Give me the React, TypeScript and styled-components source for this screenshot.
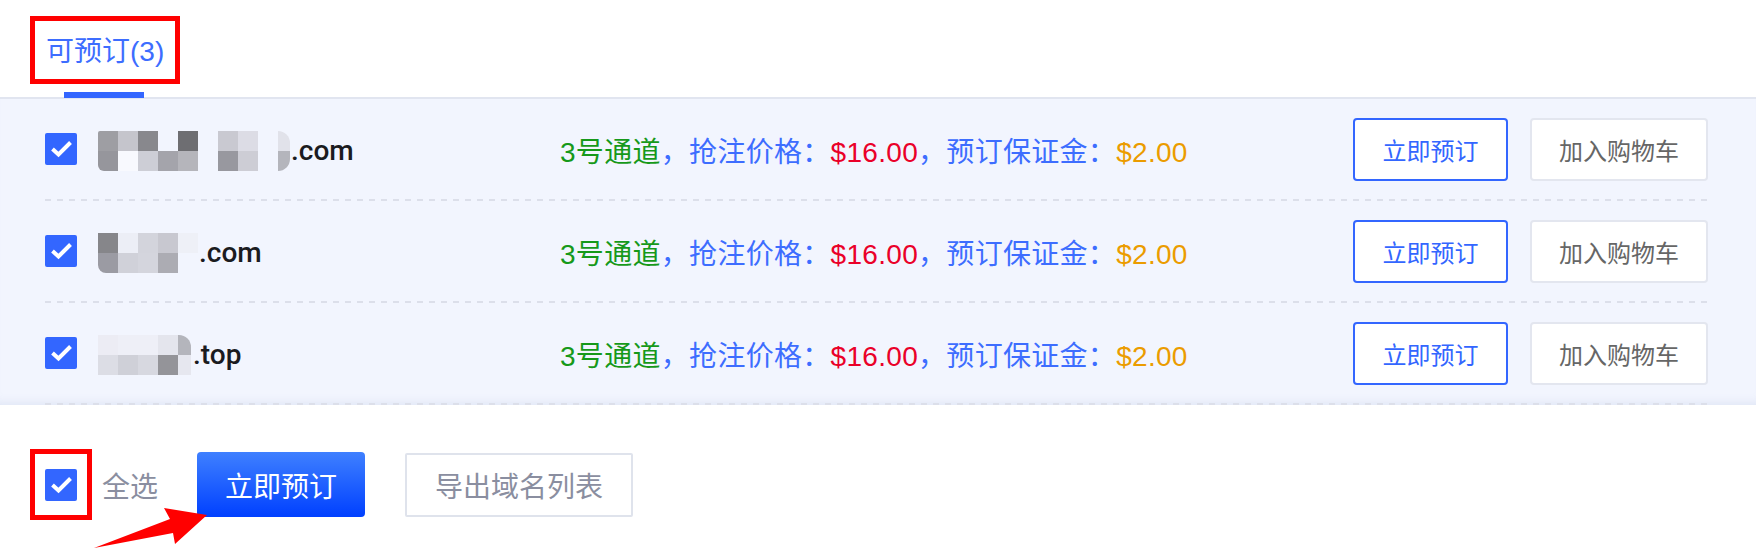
import React from "react";
import styled, { createGlobalStyle } from "styled-components";

const GlobalStyle = createGlobalStyle`
  html, body { margin: 0; padding: 0; background: #ffffff; }
  body { font-family: "Liberation Sans", "Noto Sans CJK SC", sans-serif; }
`;

const Page = styled.div`
  width: 100%;
  background: #ffffff;
`;

const Header = styled.div`
  height: 97px;
  border-bottom: 2px solid #e1e5f0;
  display: flex;
  padding-left: 46px;
  background: #ffffff;
`;

const Tab = styled.div`
  position: relative;
  display: flex;
  align-items: center;
  font-size: 28px;
  color: #3d6dff;
  white-space: nowrap;
`;

const TabIndicator = styled.span`
  position: absolute;
  left: 50%;
  bottom: -1px;
  width: 80px;
  height: 6px;
  margin-left: -41px;
  background: #3366ff;
`;

const Annotation = styled.span<{ $top: number; $right: number; $bottom: number; $left: number }>`
  position: absolute;
  top: ${(p) => p.$top}px;
  right: ${(p) => p.$right}px;
  bottom: ${(p) => p.$bottom}px;
  left: ${(p) => p.$left}px;
  border: 5px solid #ff0000;
  pointer-events: none;
`;

const List = styled.div`
  background: #f2f5fe;
  box-shadow: inset 0 -10px 10px -8px rgba(200, 208, 232, 0.45);
`;

const Row = styled.div`
  display: flex;
  align-items: center;
  height: 102px;
  box-sizing: border-box;
  padding-bottom: 2px;
  margin: 0 48px 0 45px;
  background-image: linear-gradient(to right, #dcdfea 50%, transparent 50%);
  background-size: 12px 2px;
  background-repeat: repeat-x;
  background-position: left bottom;
`;

const CheckBox = styled.span`
  position: relative;
  width: 32px;
  height: 32px;
  flex-shrink: 0;
  background: #3366ff;
  border-radius: 2px;
  display: flex;
  align-items: center;
  justify-content: center;
`;

const Domain = styled.div`
  width: 462px;
  margin-left: 21px;
  display: flex;
  align-items: center;
  flex-shrink: 0;
  padding-top: 3px;
`;

const Mosaic = styled.div<{ $cols: string; $radius: string }>`
  display: grid;
  grid-template-columns: ${(p) => p.$cols};
  grid-template-rows: 20px 20px;
  border-radius: ${(p) => p.$radius};
  overflow: hidden;
`;

const Cell = styled.span<{ $color: string }>`
  background: ${(p) => p.$color};
`;

const DomainText = styled.span<{ $gap: number }>`
  margin-left: ${(p) => p.$gap}px;
  font-family: Roboto, "Liberation Sans", sans-serif;
  font-size: 28px;
  font-weight: 500;
  color: #1b1b1f;
`;

const Info = styled.div`
  flex: 1;
  font-size: 28px;
  letter-spacing: 0.3px;
  white-space: nowrap;
  padding-top: 1px;
`;

const toneColors: Record<string, string> = {
  green: "#16991a",
  blue: "#3d6dff",
  red: "#ea0029",
  orange: "#eb9c00",
};

const Seg = styled.span<{ $tone: string }>`
  color: ${(p) => toneColors[p.$tone]};
`;

const Actions = styled.div`
  display: flex;
  gap: 22px;
`;

const BaseButton = styled.button`
  box-sizing: border-box;
  height: 63px;
  padding: 0;
  background: #ffffff;
  border-radius: 4px;
  font-family: inherit;
  font-size: 24px;
  cursor: pointer;
`;

const OutlineButton = styled(BaseButton)`
  width: 155px;
  border: 2px solid #3366ff;
  color: #3366ff;
`;

const GhostButton = styled(BaseButton)`
  width: 178px;
  border: 2px solid #e3e6ef;
  color: #666666;
`;

const Footer = styled.div`
  position: relative;
  height: 155px;
  box-sizing: border-box;
  padding: 47px 0 0 45px;
`;

const FooterBar = styled.div`
  display: flex;
  align-items: center;
  height: 65px;
`;

const SelectAll = styled.span`
  margin-left: 25px;
  font-size: 28px;
  color: #8a8ea0;
`;

const PrimaryButton = styled.button`
  margin-left: 39px;
  width: 168px;
  height: 65px;
  border: none;
  border-radius: 4px;
  background: linear-gradient(180deg, #3f80ff 0%, #0040ff 100%);
  color: #ffffff;
  font-family: inherit;
  font-size: 28px;
  padding: 0;
`;

const ExportButton = styled.button`
  margin-left: 40px;
  width: 228px;
  height: 64px;
  box-sizing: border-box;
  border: 2px solid #dfe3ec;
  border-radius: 2px;
  background: #ffffff;
  color: #8a8ea0;
  font-family: inherit;
  font-size: 28px;
  padding: 0;
`;

const ArrowSvg = styled.svg`
  position: absolute;
  left: 0;
  top: 0;
  pointer-events: none;
`;

const Check = () => (
  <svg width="32" height="32" viewBox="0 0 32 32">
    <polyline points="7.5,16 13.5,21.5 25.5,9.5" fill="none" stroke="#ffffff" strokeWidth="4" />
  </svg>
);

type RowData = {
  cols: string;
  radius: string;
  top: string[];
  bottom: string[];
  tld: string;
  gap: number;
};

const T = "transparent";

const rows: RowData[] = [
  {
    cols: "repeat(9, 20px) 12px",
    radius: "2px 12px 12px 6px",
    top: ["#9e9ea3", "#c5c5cc", "#88888d", T, "#6e6e72", T, "#c9c9d1", "#dcdce5", T, "#e1e2ea"],
    bottom: ["#96969c", "#f8f9fe", "#cdced6", "#a4a4ab", "#b5b5bb", T, "#98989f", "#cdcdd5", T, "#b4b5bc"],
    tld: ".com",
    gap: 1,
  },
  {
    cols: "repeat(5, 20px)",
    radius: "0 0 0 8px",
    top: ["#86868a", "#eceef6", "#d3d4dc", "#c8c8d0", "#eef0f7"],
    bottom: ["#9b9ba3", "#d0d1d9", "#d4d5dd", "#acacb3", T],
    tld: ".com",
    gap: 1,
  },
  {
    cols: "repeat(4, 20px) 13px",
    radius: "0 12px 0 0",
    top: ["#ececf4", "#eeeff7", "#eeeff7", "#e4e5ed", "#b4b5bc"],
    bottom: ["#dcdde5", "#cfd0d8", "#d7d8e0", "#949499", "#e6e7ef"],
    tld: ".top",
    gap: 2,
  },
];

export default function App() {
  return (
    <Page>
      <GlobalStyle />
      <Header>
        <Tab>
          可预订(3)
          <TabIndicator />
          <Annotation $top={16} $right={-16} $bottom={13} $left={-16} />
        </Tab>
      </Header>
      <List>
        {rows.map((r, i) => (
          <Row key={i}>
            <CheckBox>
              <Check />
            </CheckBox>
            <Domain>
              <Mosaic $cols={r.cols} $radius={r.radius}>
                {[...r.top, ...r.bottom].map((c, j) => (
                  <Cell key={j} $color={c} />
                ))}
              </Mosaic>
              <DomainText $gap={r.gap}>{r.tld}</DomainText>
            </Domain>
            <Info>
              <Seg $tone="green">3号通道</Seg>
              <Seg $tone="blue">，抢注价格：</Seg>
              <Seg $tone="red">$16.00</Seg>
              <Seg $tone="blue">，预订保证金：</Seg>
              <Seg $tone="orange">$2.00</Seg>
            </Info>
            <Actions>
              <OutlineButton>立即预订</OutlineButton>
              <GhostButton>加入购物车</GhostButton>
            </Actions>
          </Row>
        ))}
      </List>
      <Footer>
        <FooterBar>
          <CheckBox>
            <Check />
            <Annotation $top={-20} $right={-15} $bottom={-19} $left={-15} />
          </CheckBox>
          <SelectAll>全选</SelectAll>
          <PrimaryButton>立即预订</PrimaryButton>
          <ExportButton>导出域名列表</ExportButton>
        </FooterBar>
        <ArrowSvg width="220" height="155" viewBox="0 0 220 155">
          <polygon points="94,143 170,114 164,103 207,110 175,139 173,128" fill="#ff0000" />
        </ArrowSvg>
      </Footer>
    </Page>
  );
}
